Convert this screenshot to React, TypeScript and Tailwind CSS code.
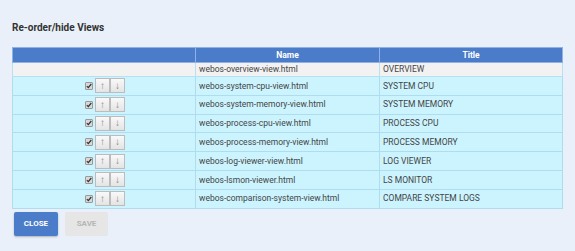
import React from 'react';

const views = [
  { name: 'webos-system-cpu-view.html', title: 'SYSTEM CPU' },
  { name: 'webos-system-memory-view.html', title: 'SYSTEM MEMORY' },
  { name: 'webos-process-cpu-view.html', title: 'PROCESS CPU' },
  { name: 'webos-process-memory-view.html', title: 'PROCESS MEMORY' },
  { name: 'webos-log-viewer-view.html', title: 'LOG VIEWER' },
  { name: 'webos-lsmon-viewer.html', title: 'LS MONITOR' },
  { name: 'webos-comparison-system-view.html', title: 'COMPARE SYSTEM LOGS' },
];

const CheckBox = () => (
  <span className="inline-flex h-[8px] w-[8px] items-center justify-center rounded-[1px] border border-[#9a9a9a] bg-[#d8d8d8]">
    <svg width="6" height="6" viewBox="0 0 6 6">
      <path d="M0.8 3.2 L2.3 4.7 L5.3 1" fill="none" stroke="#333" strokeWidth="1.2" />
    </svg>
  </span>
);

const ArrowBtn = ({ glyph }: { glyph: string }) => (
  <span className="flex h-[15px] w-[15px] items-center justify-center border border-[#bcbcbc] bg-gradient-to-b from-[#f9f9f9] to-[#e4e4e4] text-[10px] leading-none text-[#888]">
    {glyph}
  </span>
);

export default function App() {
  return (
    <div
      className="h-[251px] w-[575px] bg-[#eaf0f9] px-3 pt-[22px] text-[#333]"
      style={{ fontFamily: 'Roboto, "Liberation Sans", sans-serif' }}
    >
      <h2 className="text-[10px] font-bold leading-[12px] text-[#333]">Re-order/hide Views</h2>
      <table className="mt-[13px] w-[551px] border-collapse text-[8.5px] text-[#444]">
        <thead>
          <tr className="h-[15px] bg-[#4a7cc9] text-white">
            <th className="w-[183px] border border-[#8fb2e6] font-bold"></th>
            <th className="w-[184px] border border-[#8fb2e6] font-bold">Name</th>
            <th className="border border-[#8fb2e6] font-bold">Title</th>
          </tr>
        </thead>
        <tbody>
          <tr className="h-[14px] bg-[#f2f2f2]">
            <td className="border border-[#b7e0f2]"></td>
            <td className="border border-[#b7e0f2] px-[3px]">webos-overview-view.html</td>
            <td className="border border-[#b7e0f2] px-[3px]">OVERVIEW</td>
          </tr>
          {views.map((v) => (
            <tr key={v.name} className="h-[18.8px] bg-[#ccf4ff]">
              <td className="border border-[#b0dcf0]">
                <div className="flex items-center justify-center gap-[2px] pl-[2px]">
                  <CheckBox />
                  <div className="flex">
                    <ArrowBtn glyph="↑" />
                    <ArrowBtn glyph="↓" />
                  </div>
                </div>
              </td>
              <td className="border border-[#b0dcf0] px-[3px]">{v.name}</td>
              <td className="border border-[#b0dcf0] px-[3px]">{v.title}</td>
            </tr>
          ))}
        </tbody>
      </table>
      <div className="mt-[3px] flex gap-[7px] pl-[2px]">
        <button className="h-[24px] w-[44px] rounded-[2px] bg-[#4a7cc9] text-[8px] font-bold text-white shadow-[0_1px_2px_rgba(0,0,0,0.25)]">
          CLOSE
        </button>
        <button className="h-[24px] w-[43px] rounded-[2px] bg-[#e6e6e6] text-[8px] font-bold text-[#b5b5b5]">
          SAVE
        </button>
      </div>
    </div>
  );
}
